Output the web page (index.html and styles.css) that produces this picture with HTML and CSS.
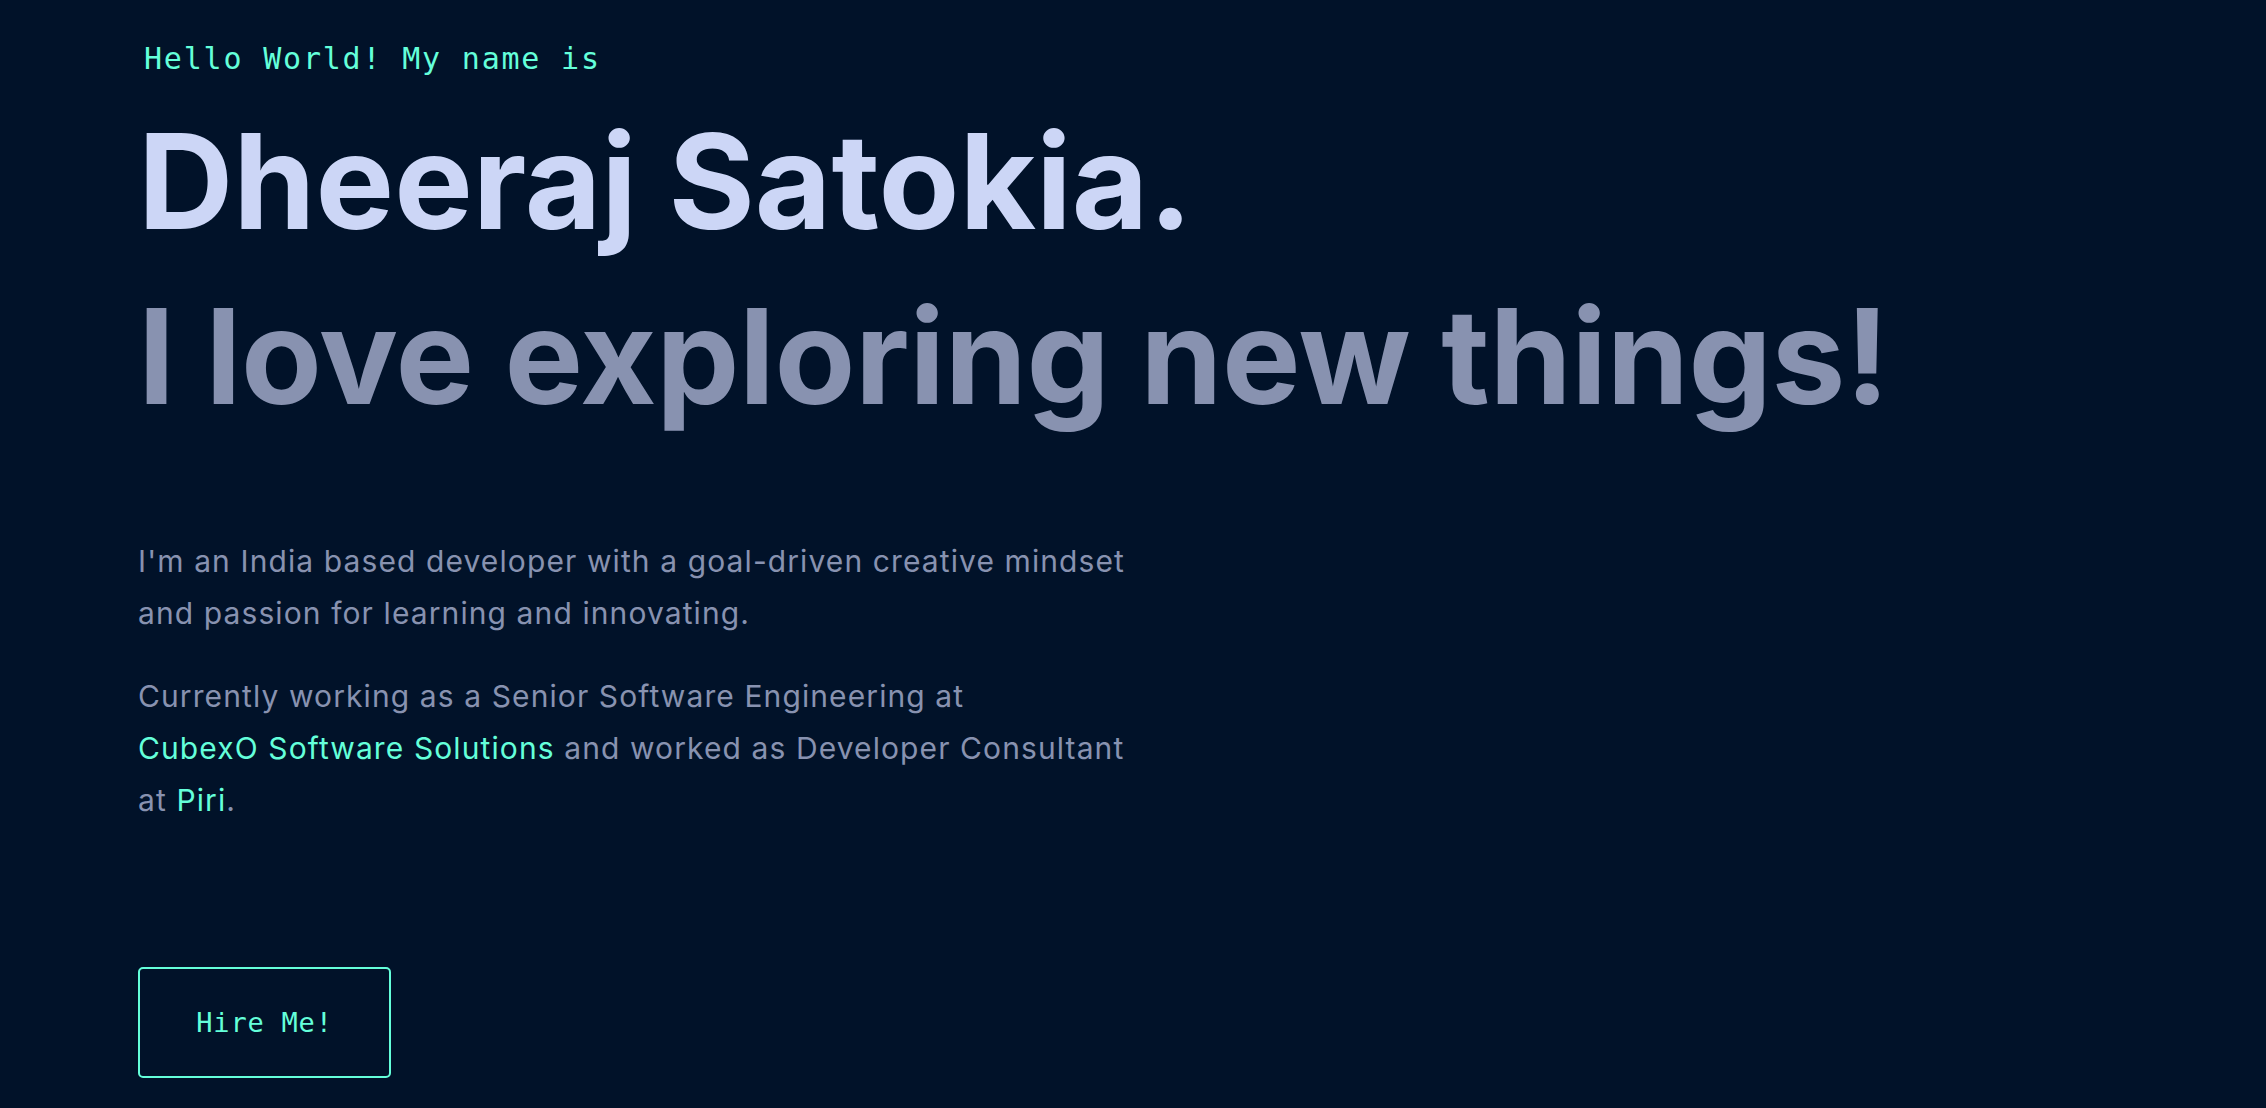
FILE: index.html
```html
<!DOCTYPE html>
<html lang="en">
<head>
<meta charset="utf-8">
<title>Dheeraj Satokia</title>
<link rel="stylesheet" href="styles.css">
</head>
<body>
<main class="hero">
  <p class="hello">Hello World! My name is</p>
  <h1 class="name">Dheeraj Satokia.</h1>
  <h2 class="tagline">I love exploring new things!</h2>
  <div class="about">
    <p class="text">I'm an India based developer with a goal-driven creative mindset<br>and passion for learning and innovating.</p>
    <p class="text">Currently working as a Senior Software Engineering at<br><a class="link" href="#">CubexO Software Solutions</a> and worked as Developer Consultant<br>at <a class="link" href="#">Piri</a>.</p>
  </div>
  <a class="btn" href="#">Hire Me!</a>
</main>
</body>
</html>
```
FILE: styles.css
```css
html, body {
  margin: 0;
  padding: 0;
  background: #011229;
  height: 100%;
}
body {
  font-family: Inter, "Noto Sans", sans-serif;
  color: #8892b0;
  overflow: hidden;
}
.hero {
  display: flex;
  flex-direction: column;
  align-items: flex-start;
  padding: 0 0 0 138px;
}
.hello {
  margin: 44px 0 0 6px;
  font-family: "DejaVu Sans Mono", "Liberation Mono", monospace;
  font-size: 30px;
  line-height: 30px;
  letter-spacing: 1.8px;
  color: #64ffda;
}
.name {
  margin: 40px 0 0 0;
  font-size: 132px;
  line-height: 134px;
  font-weight: 700;
  letter-spacing: 0;
  color: #ccd6f6;
}
.tagline {
  margin: 41px 0 0 0;
  font-size: 132px;
  line-height: 134px;
  font-weight: 700;
  letter-spacing: -0.4px;
  color: #8892b0;
}
.about {
  margin-top: 112px;
}
.text {
  margin: 0 0 31px 0;
  font-size: 30px;
  line-height: 52px;
  letter-spacing: 1.1px;
  white-space: nowrap;
  color: #8892b0;
}
.link {
  color: #64ffda;
  text-decoration: none;
}
.btn {
  margin-top: 110px;
  box-sizing: border-box;
  width: 253px;
  height: 111px;
  display: flex;
  align-items: center;
  justify-content: center;
  border: 2px solid #64ffda;
  border-radius: 5px;
  font-family: "DejaVu Sans Mono", "Liberation Mono", monospace;
  font-size: 27px;
  letter-spacing: 0.8px;
  color: #64ffda;
  text-decoration: none;
}
```
